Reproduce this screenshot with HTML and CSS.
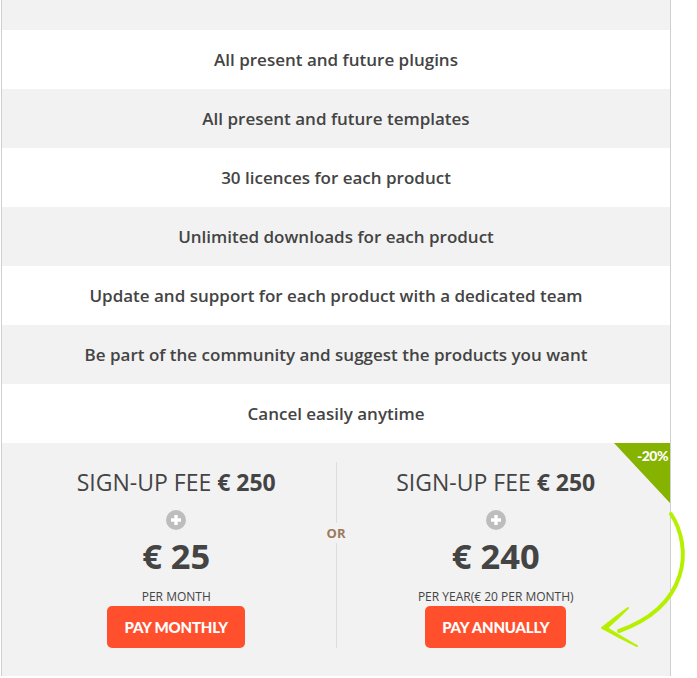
FILE: index.html
```html
<!DOCTYPE html>
<html>
<head>
<meta charset="utf-8">
<link rel="stylesheet" href="styles.css">
</head>
<body>
<div class="table">
  <div class="top"></div>
  <div class="row white">All present and future plugins</div>
  <div class="row grey">All present and future templates</div>
  <div class="row white">30 licences for each product</div>
  <div class="row grey">Unlimited downloads for each product</div>
  <div class="row white">Update and support for each product with a dedicated team</div>
  <div class="row grey">Be part of the community and suggest the products you want</div>
  <div class="row white">Cancel easily anytime</div>
  <div class="pricing">
    <div class="col left">
      <div class="fee">SIGN-UP FEE <b>€ 250</b></div>
      <div class="plus"><svg width="20" height="20" viewBox="0 0 20 20"><circle cx="10" cy="10" r="10" fill="#bdbdbd"/><path d="M10 5v10M5 10h10" stroke="#fff" stroke-width="3.4"/></svg></div>
      <div class="price">€ 25</div>
      <div class="per">PER MONTH</div>
      <a class="btn">PAY MONTHLY</a>
    </div>
    <div class="sep"><span class="or">OR</span></div>
    <div class="col right">
      <div class="fee">SIGN-UP FEE <b>€ 250</b></div>
      <div class="plus"><svg width="20" height="20" viewBox="0 0 20 20"><circle cx="10" cy="10" r="10" fill="#bdbdbd"/><path d="M10 5v10M5 10h10" stroke="#fff" stroke-width="3.4"/></svg></div>
      <div class="price">€ 240</div>
      <div class="per">PER YEAR(€ 20 PER MONTH)</div>
      <a class="btn">PAY ANNUALLY</a>
    </div>
    <div class="ribbon"><span>-20%</span></div>
  </div>
  <svg class="arrow" width="100" height="150" viewBox="590 505 100 150">
    <path d="M670 514 C 692 548, 688 606, 618 631" fill="none" stroke="#b6f000" stroke-width="4" stroke-linecap="round"/>
    <path d="M627 608 Q 612 619 601 628 Q 617 637 636 646 Q 617 635 606 628 Q 616 619 627 608 Z" fill="#b6f000" stroke="#b6f000" stroke-width="2" stroke-linejoin="round"/>
  </svg>
</div>
</body>
</html>
```
FILE: styles.css
```css
html, body {
  margin: 0;
  padding: 0;
  background: #fff;
}
body {
  font-family: "Open Sans", "Liberation Sans", sans-serif;
  color: #444;
}
.table {
  position: relative;
  width: 668px;
  margin-left: 1px;
  border-left: 1px solid #d0d0d0;
  border-right: 1px solid #d0d0d0;
  background: #f2f2f2;
  padding-bottom: 2px;
}
.top {
  height: 30px;
  background: #f2f2f2;
}
.row {
  height: 59px;
  display: flex;
  align-items: center;
  justify-content: center;
  font-size: 17px;
  font-weight: 600;
  color: #444;
}
.row.white { background: #fff; }
.row.grey { background: #f2f2f2; }
.pricing {
  position: relative;
  height: 231px;
  display: flex;
  padding: 19px 15px 0;
  box-sizing: border-box;
  overflow: hidden;
}
.col {
  flex: 1;
  display: flex;
  flex-direction: column;
  align-items: center;
}
.fee {
  font-size: 23px;
  font-weight: 400;
  line-height: 40px;
}
.fee b { font-weight: 700; }
.plus {
  height: 20px;
  margin-top: 8px;
}
.plus svg { display: block; }
.price {
  font-size: 34.5px;
  font-weight: 700;
  line-height: 44px;
  margin-top: 4px;
}
.per {
  font-size: 12px;
  line-height: 16px;
  margin-top: 11px;
  text-transform: uppercase;
}
.btn {
  display: block;
  background: #ff4f2d;
  color: #fff;
  border-radius: 5px;
  height: 42px;
  line-height: 42px;
  padding: 0 17px;
  margin-top: 1px;
  font-family: "Lato", "Open Sans", sans-serif;
  font-weight: 900;
  font-size: 15px;
  letter-spacing: -0.2px;
}
.sep {
  position: relative;
  width: 1px;
  background: #ddd;
  margin-bottom: 26px;
}
.or {
  position: absolute;
  left: 50%;
  top: 61px;
  transform: translateX(-50%);
  background: #f2f2f2;
  color: #9c7a5c;
  font-size: 13px;
  font-weight: 700;
  line-height: 20px;
}
.ribbon {
  position: absolute;
  right: 0;
  top: 0;
  width: 56px;
  height: 60px;
  background: #86b300;
  clip-path: polygon(0 0, 100% 0, 100% 100%);
}
.ribbon span {
  position: absolute;
  right: 2px;
  top: 4px;
  color: #fff;
  font-family: "Lato", "Open Sans", sans-serif;
  font-size: 14px;
  font-weight: 900;
  letter-spacing: -0.5px;
}
.arrow {
  position: absolute;
  left: 589px;
  top: 505px;
  overflow: visible;
}
```
